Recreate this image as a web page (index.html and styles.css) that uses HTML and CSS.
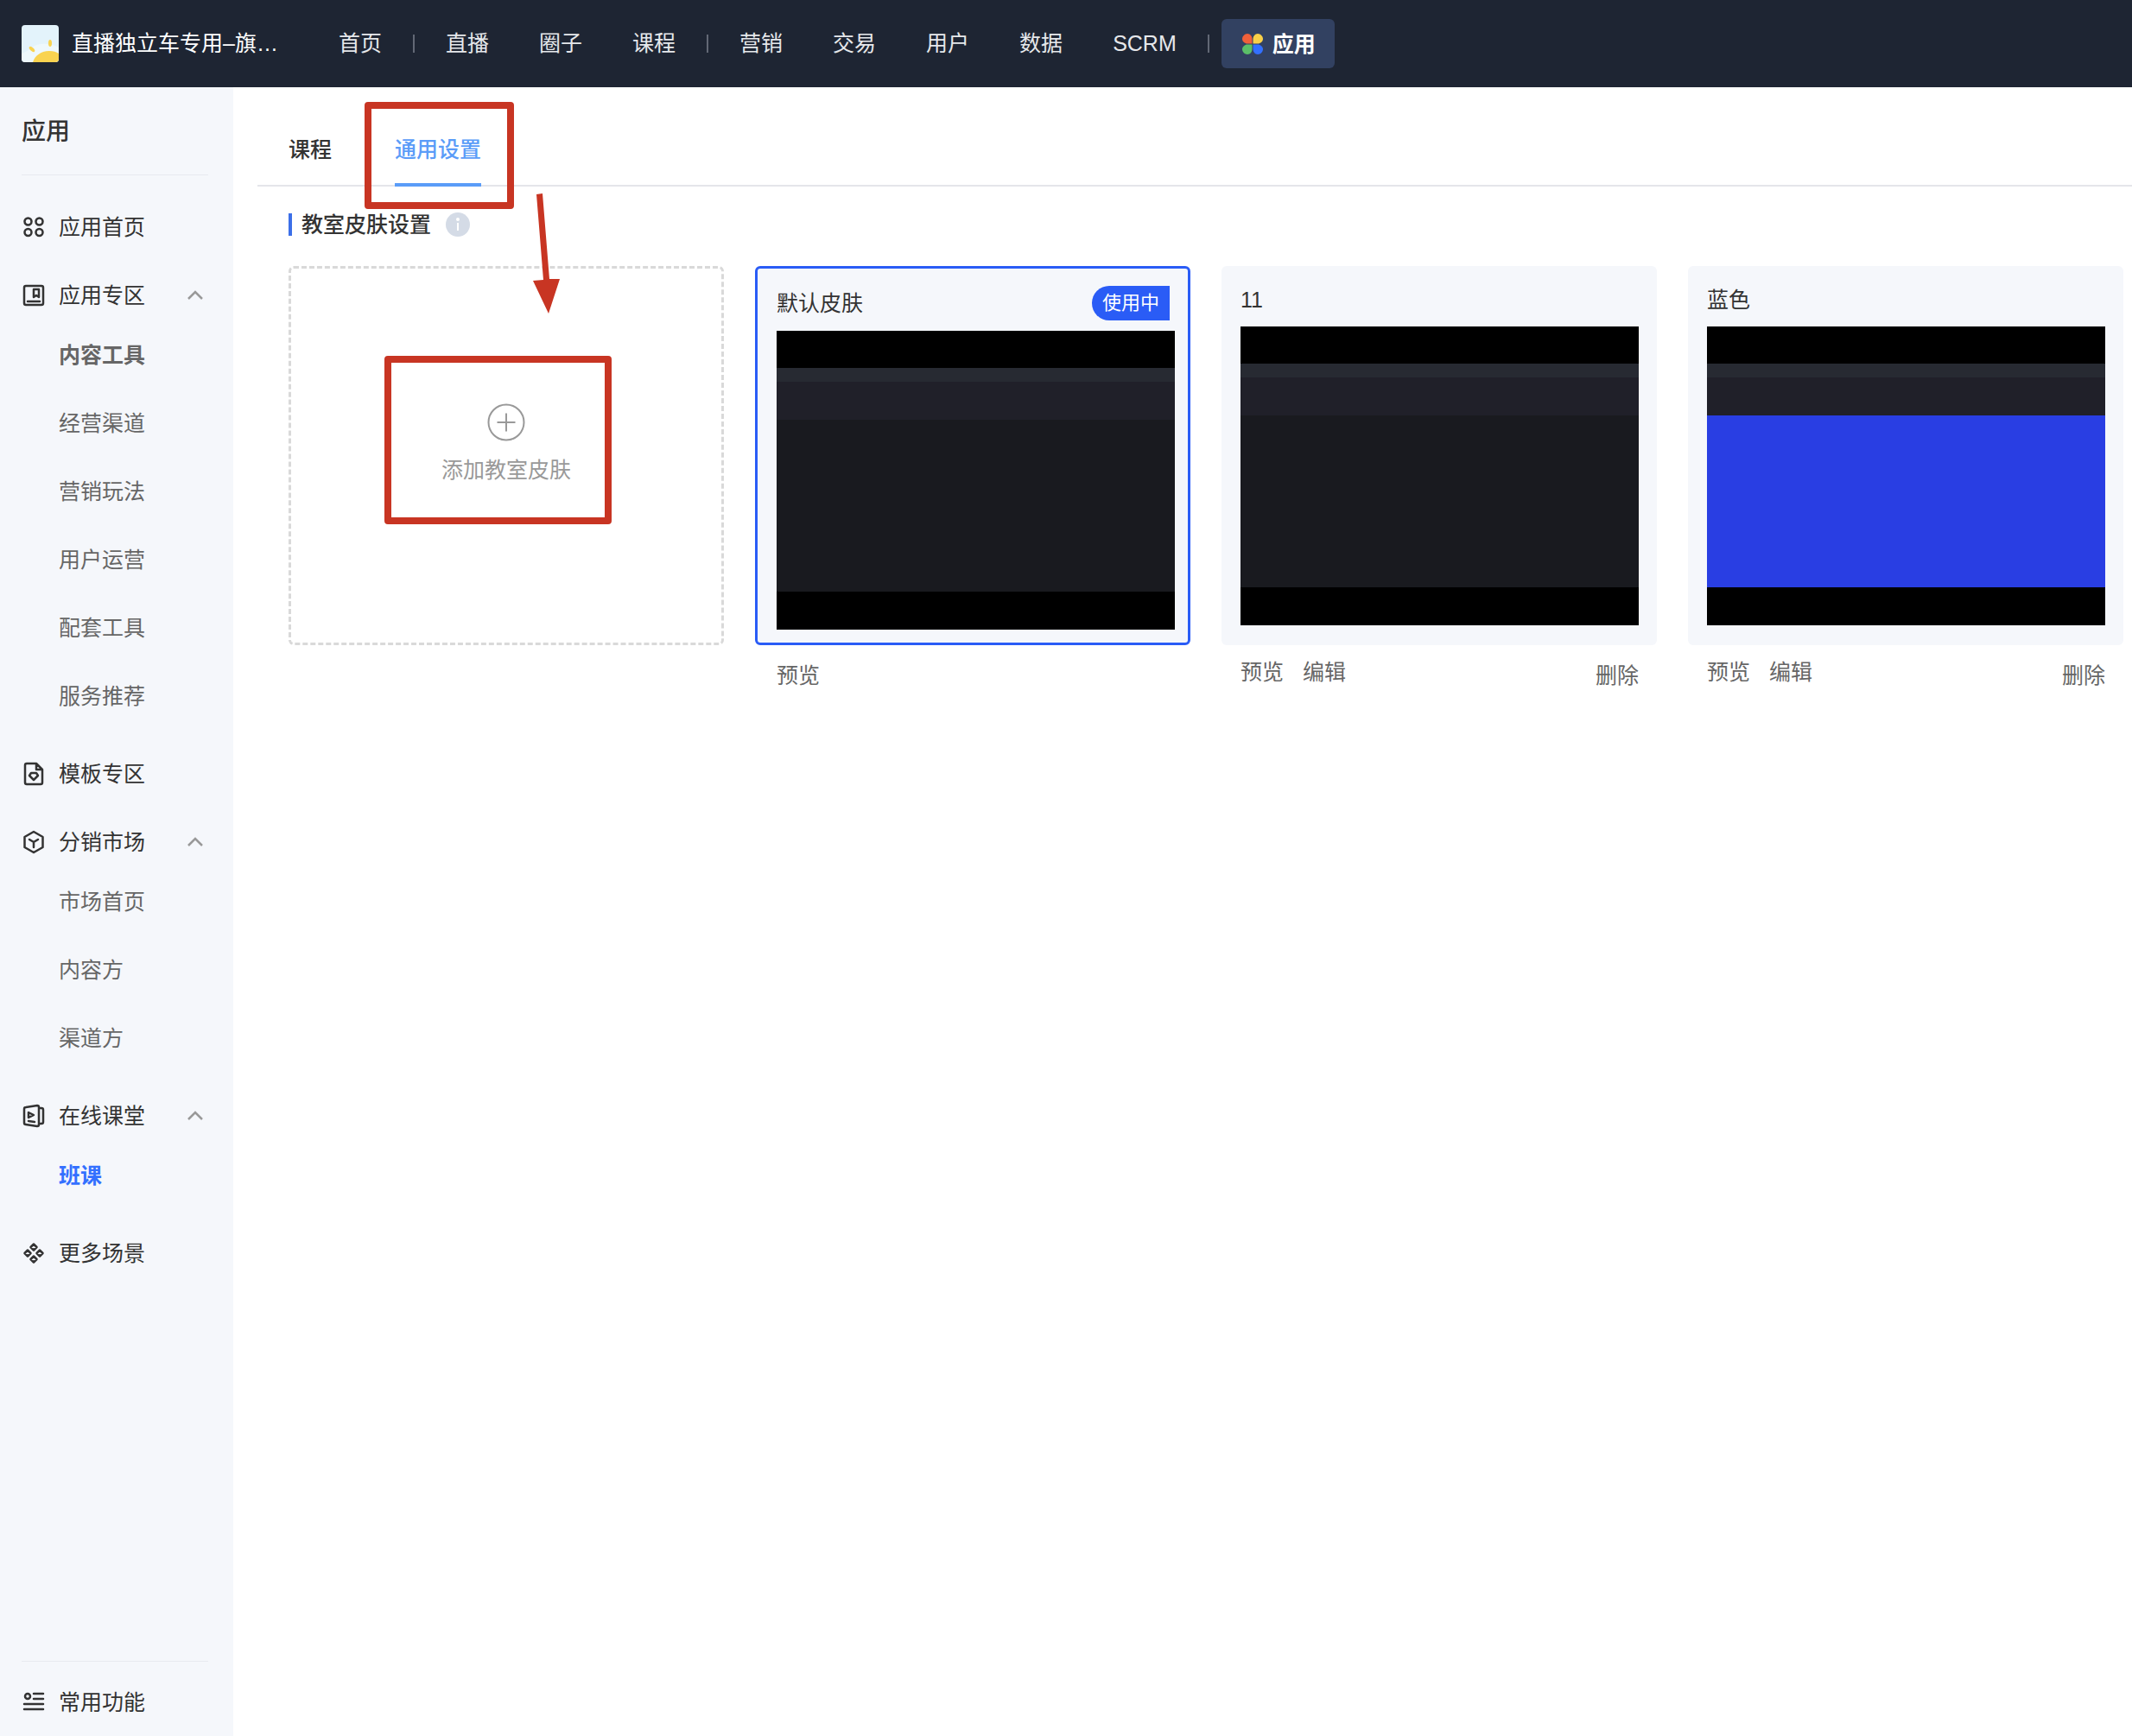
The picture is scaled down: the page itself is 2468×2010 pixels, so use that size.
FILE: index.html
```html
<!DOCTYPE html>
<html lang="zh-CN">

<head>
    <meta charset="UTF-8">
    <meta name="viewport" content="width=device-width, initial-scale=1.0">
    <title>应用 - 班课</title>
    <link rel="stylesheet" href="styles.css">
</head>

<body>
    <header class="topbar">
        <a href="#" class="shop">
            <svg class="shop-logo" viewBox="0 0 43 43">
                <rect width="43" height="43" fill="#e3f3fb"/>
                <path d="M0 43V33C6 31 9 28 12 26C18 21 32 20 43 26V43Z" fill="#eef8fc"/>
                <path d="M13 43C15 36 22 30 32 30C37 30 40 31 43 33V43Z" fill="#f9d350"/>
                <ellipse cx="33" cy="21" rx="2" ry="4" fill="#f9d350"/>
                <ellipse cx="12" cy="28" rx="2" ry="4" transform="rotate(-48 12 28)" fill="#f9d350"/>
            </svg>
            <span class="shop-name">直播独立车专用–旗…</span>
        </a>
        <nav class="topnav">
            <a href="#">首页</a>
            <i class="split"></i>
            <a href="#">直播</a>
            <a href="#">圈子</a>
            <a href="#">课程</a>
            <i class="split"></i>
            <a href="#">营销</a>
            <a href="#">交易</a>
            <a href="#">用户</a>
            <a href="#">数据</a>
            <a href="#">SCRM</a>
            <i class="split"></i>
            <a href="#" class="current">
                <svg class="app-icon" viewBox="0 0 24 24">
                    <path d="M6 0C9 0 11.500 3 11.500 6V11.500H6C3 11.500 0 9 0 6S3 0 6 0Z" fill="#f0603a"/>
                    <path d="M18 0C21 0 24 3 24 6S21 11.500 18 11.500H12.500V6C12.500 3 15 0 18 0Z" fill="#f9d048"/>
                    <path d="M6 12.500H11.500V18C11.500 21 9 24 6 24S0 21 0 18S3 12.500 6 12.500Z" fill="#5bbf68"/>
                    <path d="M12.500 12.500H18C21 12.500 24 15 24 18S21 24 18 24S12.500 21 12.500 18Z" fill="#3370ff"/>
                </svg>
                应用
            </a>
        </nav>
    </header>

    <div class="container">
        <aside class="sidebar">
            <h2>应用</h2>

            <nav class="menu">
                <div class="group">
                    <a href="#" class="item">
                        <svg class="icon" viewBox="0 0 24 24"><circle cx="5.500" cy="5.500" r="4"/><circle cx="18.500" cy="5.500" r="4"/><circle cx="5.500" cy="18" r="4"/><circle cx="18.500" cy="18" r="4"/></svg>
                        应用首页
                    </a>
                </div>

                <div class="group open">
                    <a href="#" class="item">
                        <svg class="icon" viewBox="0 0 24 24"><rect x="1" y="1" width="22" height="22" rx="2"/><path d="M12 5H18V14L15 12L12 14ZM5 19H19"/></svg>
                        应用专区
                        <svg class="arrow" viewBox="0 0 18 10"><path d="M1 9L9 1L17 9"/></svg>
                    </a>
                    <a href="#" class="sub-link strong">内容工具</a>
                    <a href="#" class="sub-link">经营渠道</a>
                    <a href="#" class="sub-link">营销玩法</a>
                    <a href="#" class="sub-link">用户运营</a>
                    <a href="#" class="sub-link">配套工具</a>
                    <a href="#" class="sub-link">服务推荐</a>
                </div>

                <div class="group">
                    <a href="#" class="item">
                        <svg class="icon" viewBox="0 0 24 24"><path d="M15 0H4Q2 0 2 2V22Q2 24 4 24H20Q22 24 22 22V7ZM15 0V7H22M9 11H15L17 14L12 19L7 14Z"/></svg>
                        模板专区
                    </a>
                </div>

                <div class="group open">
                    <a href="#" class="item">
                        <svg class="icon" viewBox="0 0 24 24"><path d="M12 0L22.500 6V18L12 24L1.500 18V6ZM7 9L12 12L17 9M12 12V18"/></svg>
                        分销市场
                        <svg class="arrow" viewBox="0 0 18 10"><path d="M1 9L9 1L17 9"/></svg>
                    </a>
                    <a href="#" class="sub-link">市场首页</a>
                    <a href="#" class="sub-link">内容方</a>
                    <a href="#" class="sub-link">渠道方</a>
                </div>

                <div class="group open">
                    <a href="#" class="item">
                        <svg class="icon" viewBox="0 0 24 24"><path d="M1 4Q1 2 3 2L16 0Q18 0 18 2V22Q18 24 16 24L3 22Q1 22 1 20ZM18 3H21Q23 3 23 5V19Q23 21 21 21H18M6 8L12 11L6 14ZM6 18L13 19"/></svg>
                        在线课堂
                        <svg class="arrow" viewBox="0 0 18 10"><path d="M1 9L9 1L17 9"/></svg>
                    </a>
                    <a href="#" class="sub-link active">班课</a>
                </div>

                <div class="group">
                    <a href="#" class="item">
                        <svg class="icon" viewBox="0 0 24 24"><path d="M12 1.500L15.500 5L12 8.500L8.500 5ZM5 8.500L8.500 12L5 15.500L1.500 12ZM19 8.500L22.500 12L19 15.500L15.500 12ZM12 15.500L15.500 19L12 22.500L8.500 19Z"/></svg>
                        更多场景
                    </a>
                </div>
            </nav>

            <div class="sidebar-footer">
                <a href="#" class="item">
                    <svg class="icon" viewBox="0 0 24 24"><circle cx="5" cy="5" r="3"/><path d="M12 2H23M12 8H23M1 14H23M1 20H23"/></svg>
                    常用功能
                </a>
            </div>
        </aside>

        <main class="main-content">
            <div class="tabs">
                <a href="#" class="tab">课程</a>
                <a href="#" class="tab active">通用设置<span class="mark mark-tab"></span></a>
            </div>

            <section class="skins">
                <div class="section-title">
                    <h3>教室皮肤设置</h3>
                    <svg class="info" viewBox="0 0 28 28"><circle cx="14" cy="14" r="14" fill="#d4dbe6"/><path d="M14 12V21" stroke="#fff" stroke-width="2"/><circle cx="14" cy="8" r="2" fill="#fff"/></svg>
                </div>

                <div class="skin-list">
                    <div class="skin">
                        <button type="button" class="add-card">
                            <svg class="plus" viewBox="0 0 44 44"><circle cx="22" cy="22" r="20.500"/><path d="M11.500 22H32.500M22 11.500V32.500"/></svg>
                            添加教室皮肤
                            <span class="mark mark-add"></span>
                        </button>
                        <svg class="guide" viewBox="0 0 40 140"><path d="M5 1L12 0L20 99L32 99L19 139L1 101L13 100Z"/></svg>
                    </div>

                    <div class="skin">
                        <div class="card selected">
                            <div class="card-head">默认皮肤<span class="badge">使用中</span></div>
                            <div class="preview"><i></i><i></i><i></i><i></i><i></i></div>
                        </div>
                        <div class="actions">
                            <a href="#" class="low">预览</a>
                        </div>
                    </div>

                    <div class="skin">
                        <div class="card">
                            <div class="card-head">11</div>
                            <div class="preview"><i></i><i></i><i></i><i></i><i></i></div>
                        </div>
                        <div class="actions">
                            <a href="#">预览</a>
                            <a href="#">编辑</a>
                            <a href="#" class="low delete">删除</a>
                        </div>
                    </div>

                    <div class="skin">
                        <div class="card">
                            <div class="card-head">蓝色</div>
                            <div class="preview blue"><i></i><i></i><i></i><i></i><i></i></div>
                        </div>
                        <div class="actions">
                            <a href="#">预览</a>
                            <a href="#">编辑</a>
                            <a href="#" class="low delete">删除</a>
                        </div>
                    </div>
                </div>
            </section>
        </main>
    </div>
</body>

</html>
```
FILE: styles.css
```css
:root {
    --top-bg: #1e2533;
    --side-bg: #f5f7fb;
    --text-color: #333333;
    --sub-color: #666666;
    --primary-color: #2a5cf6;
    --mark-color: #c83523;
}

* {
    box-sizing: border-box;
}

body {
    margin: 0;
    min-height: 100vh;
    display: flex;
    flex-direction: column;
    font-family: "Liberation Sans", "Noto Sans CJK SC", sans-serif;
    font-size: 25px;
    line-height: 36px;
    color: var(--text-color);
    background: #ffffff;
}

a {
    color: inherit;
    text-decoration: none;
}

h2,
h3 {
    margin: 0;
    font-weight: 500;
}

/* Top bar */
.topbar {
    display: flex;
    align-items: center;
    height: 101px;
    background: var(--top-bg);
    color: #ffffff;
}

.shop {
    display: flex;
    align-items: center;
    gap: 15px;
    width: 363px;
    padding-left: 25px;
}

.shop-logo {
    width: 43px;
    height: 43px;
    border-radius: 4px;
}

.shop-name {
    padding-bottom: 2px;
    white-space: nowrap;
}

.topnav {
    display: flex;
    align-items: center;
    color: #e6e8eb;
}

.topnav a {
    padding: 0 29px 2px;
}

.topnav .split {
    width: 2px;
    height: 21px;
    margin: 0 7px;
    background: #626875;
}

.topnav .current {
    display: flex;
    align-items: center;
    gap: 11px;
    height: 57px;
    margin-left: 7px;
    padding: 0 22px 0 24px;
    border-radius: 6px;
    background: #324161;
    color: #ffffff;
    font-weight: 700;
}

.app-icon {
    width: 24px;
    height: 24px;
}

.container {
    display: flex;
    flex: 1;
}

/* Sidebar */
.sidebar {
    display: flex;
    flex-direction: column;
    flex: none;
    width: 270px;
    background: var(--side-bg);
}

.sidebar h2 {
    height: 102px;
    margin: 0 29px 0 25px;
    border-bottom: 1px solid #e8eaef;
    font-size: 28px;
    line-height: 103px;
}

.menu {
    display: flex;
    flex-direction: column;
    gap: 19px;
    padding-top: 30px;
}

.group.open {
    padding-bottom: 1px;
}

.item {
    display: flex;
    align-items: center;
    height: 60px;
    padding: 0 35px 0 27px;
}

.icon {
    width: 24px;
    height: 24px;
    margin-right: 17px;
    overflow: visible;
    fill: none;
    stroke: #333333;
    stroke-width: 2.5;
    stroke-linecap: round;
    stroke-linejoin: round;
}

.arrow {
    width: 18px;
    height: 10px;
    margin-left: auto;
    overflow: visible;
    fill: none;
    stroke: #999999;
    stroke-width: 2.5;
}

.sub-link {
    display: block;
    padding-left: 68px;
    line-height: 79px;
    color: var(--sub-color);
}

.sub-link.strong {
    font-weight: 700;
}

.sub-link.active {
    color: #3370ff;
    font-weight: 700;
}

.sidebar-footer {
    margin-top: auto;
    padding-bottom: 9px;
}

.sidebar-footer::before {
    content: "";
    display: block;
    height: 1px;
    margin: 0 29px 17px 25px;
    background: #e8eaef;
}

/* Main content */
.main-content {
    flex: 1;
    min-width: 0;
    padding-left: 28px;
}

.tabs {
    display: flex;
    gap: 73px;
    height: 115px;
    padding-left: 36px;
    border-bottom: 2px solid #e4e5ea;
    font-weight: 500;
}

.tab {
    position: relative;
    height: 115px;
    padding-top: 54px;
}

.tab.active {
    color: #5a9cf8;
    border-bottom: 4px solid #5a9cf8;
}

.skins {
    padding: 24px 0 0 36px;
}

.section-title {
    display: flex;
    align-items: center;
    height: 40px;
}

.section-title h3 {
    padding-left: 11px;
    border-left: 4px solid #3c6fe8;
    font-size: 25px;
    line-height: 26px;
}

.info {
    width: 28px;
    height: 28px;
    margin-left: 17px;
}

.skin-list {
    display: grid;
    grid-template-columns: repeat(auto-fill, 504px);
    gap: 36px;
    margin-top: 28px;
}

.skin {
    position: relative;
}

.card,
.add-card {
    width: 100%;
    height: 439px;
    border-radius: 6px;
}

.add-card {
    position: relative;
    display: flex;
    flex-direction: column;
    align-items: center;
    justify-content: center;
    gap: 15px;
    padding: 0 0 27px;
    border: 3px dashed #d9d9d9;
    background: none;
    color: #999999;
    font: inherit;
    cursor: pointer;
}

.plus {
    width: 44px;
    height: 44px;
    fill: none;
    stroke: #999999;
    stroke-width: 2;
}

.card {
    padding: 15px 21px 0 22px;
    background: var(--side-bg);
}

.card.selected {
    padding-right: 15px;
    border: 3px solid var(--primary-color);
}

.card-head {
    display: flex;
    align-items: center;
    justify-content: space-between;
    min-height: 48px;
    margin-bottom: 7px;
}

.badge {
    margin: 5px 6px 5px 0;
    padding: 0 12px;
    border-radius: 20px 0 0 20px;
    background: var(--primary-color);
    color: #ffffff;
    font-size: 22px;
    line-height: 40px;
}

/* Classroom thumbnail, five stacked bands */
.preview {
    display: grid;
    grid-template-rows: 43px 16px 44px 199px 44px;
    background: #000000;
}

.preview i:nth-child(2) {
    background: #272a32;
}

.preview i:nth-child(3) {
    background: #202029;
}

.preview i:nth-child(4) {
    background: #191a1f;
}

.preview.blue i:nth-child(4) {
    background: #293ee3;
}

.actions {
    display: flex;
    align-items: flex-start;
    gap: 22px;
    padding: 13px 21px 0 22px;
    color: var(--sub-color);
}

.selected + .actions {
    padding-left: 25px;
}

.actions .low {
    padding-top: 4px;
}

.actions .delete {
    margin-left: auto;
}

/* Red guide marks */
.mark {
    position: absolute;
    border: 8px solid var(--mark-color);
    border-radius: 4px;
}

.mark-tab {
    top: 17px;
    left: -35px;
    right: -38px;
    bottom: -30px;
}

.mark-add {
    top: 101px;
    left: 108px;
    width: 263px;
    height: 195px;
}

.guide {
    position: absolute;
    top: -84px;
    left: 282px;
    width: 40px;
    height: 140px;
    fill: var(--mark-color);
}
```
